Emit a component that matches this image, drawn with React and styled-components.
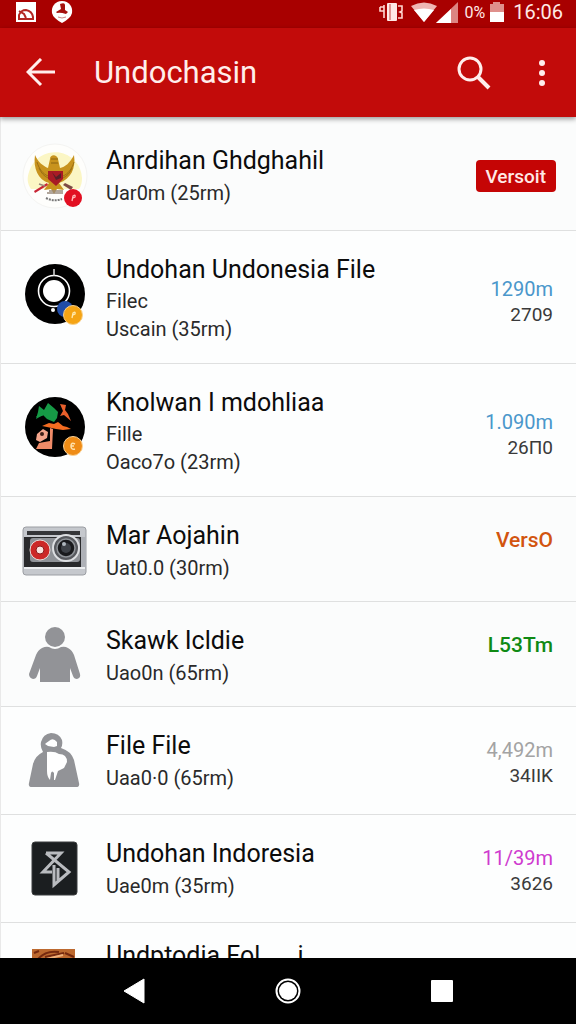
import React from "react";
import styled, { createGlobalStyle, css } from "styled-components";

// every download in the list, "size" picks the row padding
const downloads = [
	{
		icon: "garuda",
		title: "Anrdihan Ghdghahil",
		meta: "Uar0m (25rm)",
		badge: "Versoit",
		size: "first",
	},
	{
		icon: "disc",
		title: "Undohan Undonesia File",
		kind: "Filec",
		meta: "Uscain (35rm)",
		value: "1290m",
		count: "2709",
		tone: "#4a97cb",
		size: "tall",
	},
	{
		icon: "plants",
		title: "Knolwan I mdohliaa",
		kind: "Fille",
		meta: "Oaco7o (23rm)",
		value: "1.090m",
		count: "26Π0",
		tone: "#4a97cb",
		size: "tall",
	},
	{
		icon: "camera",
		title: "Mar Aojahin",
		meta: "Uat0.0 (30rm)",
		value: "VersO",
		tone: "#d2540f",
		strong: true,
		size: "compact",
	},
	{
		icon: "person",
		title: "Skawk Icldie",
		meta: "Uao0n (65rm)",
		value: "L53Tm",
		tone: "#0f8a14",
		strong: true,
		size: "compact",
	},
	{
		icon: "bag",
		title: "File File",
		meta: "Uaa0·0 (65rm)",
		value: "4,492m",
		count: "34IIK",
		tone: "#a3a3a3",
		size: "regular",
	},
	{
		icon: "bluetooth",
		title: "Undohan Indoresia",
		meta: "Uae0m (35rm)",
		value: "11/39m",
		count: "3626",
		tone: "#cf3bcf",
		size: "regular",
	},
	{
		icon: "photo",
		title: "Undptodia Fol\u00a0\u00a0\u00a0\u00a0\u00a0\u00a0i",
		size: "last",
	},
];

function AvatarArt({ name }) {
	switch (name) {
		case "garuda":
			return (
				<>
					<circle cx="33" cy="31" r="32" fill="#fefefc" stroke="#f4f4f2" />
					<path d="M7 27a27 27 0 0 1 53 6c0 5-1 8-3 11H9C5 38 5 33 7 27z" fill="#fbf6c4" />
					<path
						d="M13 10c-2 13 3 25 14 28l-5 7 7-1 3 5 3-5 7 1-5-7c12-4 17-15 15-28-4 8-9 12-14 13l-2-9c-1-5-8-5-8 0l-2 9c-5-2-10-6-13-13z"
						fill="#c8931d"
					/>
					<path d="M15 17c2 7 6 12 11 14m-9-8c2 5 5 8 9 10m26-16c-2 7-6 12-11 14m9-8c-2 5-5 8-9 10" stroke="#9b7014" fill="none" />
					<path d="M29 14h7m-7 4h7" stroke="#8c6512" />
					<path d="M26 26h15v8l-7 7-8-7z" fill="#a81a25" />
					<path d="M30 27l4 5 5-4v5l-5 2z" fill="#542027" />
					<path d="M12 46l13-8 1 2-13 8z" fill="#c82535" />
					<path d="M43 38l8 4-2 3-8-5z" fill="#7d4a45" />
					<path d="M17 39l6 2m4 5h14M25 48h16" stroke="#98897b" strokeWidth="1.5" fill="none" />
					<path d="M24 53q8 4 16 1" stroke="#777" strokeWidth="2" strokeDasharray="2 1" fill="none" />
					<circle cx="51" cy="53" r="9" fill="#e20f22" />
					<path d="M50 56l1-5q3-2 2 1l-2 1" stroke="#ffb8b8" strokeWidth="1.3" fill="none" />
				</>
			);
		case "disc":
			return (
				<>
					<circle cx="33" cy="31" r="30" fill="#000" />
					<circle cx="32" cy="28" r="15.5" fill="none" stroke="#fff" strokeWidth="1.6" />
					<circle cx="32" cy="28" r="11" fill="#fff" />
					<path d="M32 6v7" stroke="#ddd" strokeWidth="1.5" />
					<circle cx="31" cy="47" r="2" fill="#fff" />
					<circle cx="43" cy="46" r="8" fill="#204ca6" />
					<circle cx="51" cy="52" r="9.5" fill="#f5a414" stroke="#f8d18d" />
					<path d="M50 55l1-5q3-2 2 1l-2 1" stroke="#ffe9ad" strokeWidth="1.3" fill="none" />
				</>
			);
		case "plants":
			return (
				<>
					<circle cx="33" cy="31" r="30" fill="#000" />
					<path d="M17 10l5 4 4-7 6 5 4 4-1 6-3 4-7-3-4-4-7 4 2-7z" fill="#169a46" />
					<path d="M14 21l5-6 4 3-3 2z" fill="#169a46" />
					<path d="M38 8l6 1-1 5 3 4 3 7-7-6-4 1 3-5z" fill="#e95f2b" />
					<path d="M27 27l5 1 4-2 5 4 4 1 4 2-8 1-7-1-9-2-5-1z" fill="#f36c21" />
					<path d="M28 32l3 1-1 20H14l3-6 11-2z" fill="#f08b68" />
					<path d="M15 38l6-5 5 3-1 6-7 4-4-2z" fill="#f4a58b" />
					<circle cx="20" cy="38" r="2" fill="#402018" />
					<circle cx="51" cy="50" r="9.5" fill="#ef8c16" stroke="#fbd398" />
					<path d="M53 48q-4-2-4 2t4 3m-4-3h3" stroke="#ffe3ae" strokeWidth="1.5" fill="none" />
				</>
			);
		case "camera":
			return (
				<>
					<rect x="1" y="7" width="63" height="48" rx="3" fill="#c5c8cd" stroke="#9b9ea3" />
					<rect x="5" y="11" width="53" height="4" fill="#353639" />
					<path d="M2 17h57v30H2z" fill="#292a2c" />
					<rect x="8" y="18" width="50" height="24" rx="3" fill="#8f9297" />
					<path d="M59 17h5v30h-5z" fill="#aeb1b7" />
					<path d="M2 48h61" stroke="#eceef0" strokeWidth="2" />
					<circle cx="18" cy="30" r="10" fill="#cc2827" stroke="#e8dad8" />
					<circle cx="18" cy="30" r="4" fill="#f9e4de" stroke="#8f1719" />
					<circle cx="44" cy="28" r="13" fill="#57595e" stroke="#dddfe2" strokeWidth="2" />
					<circle cx="44" cy="28" r="9" fill="#191a1d" stroke="#8f9398" strokeWidth="1.5" />
					<circle cx="44" cy="28" r="5" fill="#3d4147" />
					<circle cx="42" cy="24" r="2" fill="#aeb6bd" />
				</>
			);
		case "person":
			return (
				<g fill="#929397">
					<circle cx="33" cy="12" r="10" />
					<path d="M20 23q4-2 7-1 6 4 12 0 4-1 7 1 4 2 6 7l6 19q1 4-3 5-3 0-4-3l-3-8v14H18V43l-3 8q-1 3-4 3-4-1-4-5l7-19q2-5 6-7z" />
				</g>
			);
		case "bag":
			return (
				<>
					<path
						d="M7 53l4-19q2-8 10-12-3-5-2-10 2-8 10-9 8 0 11 7 1 5-1 8 10 3 13 12l5 23q1 4-3 4H10q-4 0-3-4z"
						fill="#929397"
					/>
					<path d="M23 14q1-1 4-3 4-4 8 1v4l-3 1-6-1z" fill="#fff" />
					<path d="M25 22q8-1 12 2 8 0 8 8l-3 6-6 3-3 9h-1v-7q-2-3-3 0l-1 7q-3-3-3-9z" fill="#fff" />
				</>
			);
		case "bluetooth":
			return (
				<>
					<rect x="10" y="4" width="45" height="53" rx="3" fill="#1b1e20" stroke="#3b3d3e" />
					<path d="M24 15h15L21 34h9M24 15l23 19-15 13V27M36 30v13" fill="none" stroke="#b9bbbf" strokeWidth="3" />
				</>
			);
		default:
			return (
				<>
					<path d="M10 10h43v44H10z" fill="#bc692f" />
					<path d="M16 20q8-9 21-7m-14 5l19-4M12 14l5-2m26 2l9 4" stroke="#75290f" strokeWidth="2" fill="none" />
					<path d="M20 21l21-5" stroke="#f1b27b" strokeWidth="2" />
				</>
			);
	}
}

function StatusIcons() {
	return (
		<StatusGroup>
			<svg width="26" height="20" viewBox="0 0 26 20" aria-hidden="true">
				<path d="M6 3v13M2 5v4h4M2 5h4M20 4h4v5l-2 1 2 1v5h-4" stroke="#ffd6d0" strokeWidth="1.6" fill="none" />
				<rect x="9" y="1" width="10" height="18" rx="1" fill="#ffe9e6" />
				<path d="M12 2v16" stroke="#c54540" />
			</svg>
			<svg width="52" height="22" viewBox="0 0 52 22" aria-hidden="true">
				<path d="M3 5q13-7 26 0L16 21z" fill="#efb6b3" />
				<path d="M6 9q10-3 20 0L16 21z" fill="#fff" />
				<path d="M50 1v21H28z" fill="#dc8582" />
				<path d="M43 8v14H28z" fill="#fff" />
			</svg>
			<Percent>0%</Percent>
			<svg width="16" height="20" viewBox="0 0 16 20" aria-hidden="true">
				<path d="M1 2h3V0h7v2h4v9H1z" fill="#df908c" />
				<path d="M1 10h14v10H1z" fill="#fff" />
			</svg>
			<Clock>16:06</Clock>
		</StatusGroup>
	);
}

function DownloadRow({ item }) {
	const tall = item.size === "tall";
	return (
		<Row $size={item.size}>
			<Avatar viewBox="0 0 66 62" $tall={tall} aria-hidden="true">
				<AvatarArt name={item.icon} />
			</Avatar>
			<Details>
				<Name>{item.title}</Name>
				{item.kind && <Meta $tall={tall}>{item.kind}</Meta>}
				{item.meta && <Meta $tall={tall}>{item.meta}</Meta>}
			</Details>
			{item.badge && <Badge type="button">{item.badge}</Badge>}
			{item.value && (
				<Values $tall={tall}>
					<Value $tone={item.tone} $strong={item.strong}>
						{item.value}
					</Value>
					{item.count && <Count>{item.count}</Count>}
				</Values>
			)}
		</Row>
	);
}

function App() {
	return (
		<>
			<GlobalStyle />
			<Screen>
				<StatusBar>
					<StatusGroup>
						<Notice viewBox="0 0 22 22" aria-hidden="true">
							<path d="M1 1h20v20H1z" fill="#fff" />
							<path d="M4 18v-4q2-5 7-5 6 1 7 7v2M4 10l5 3 2 4M3 18h16" stroke="#b32622" strokeWidth="2" fill="none" />
						</Notice>
						<Notice viewBox="0 0 22 22" aria-hidden="true">
							<path d="M11 0C4 0 0 6 1 12q1 5 10 10 9-5 10-10C22 6 18 0 11 0z" fill="#fff" />
							<path d="M9 3q5-2 5 1v5l3 2-2 2q-6-2-9-1l-1-1 5-3z" fill="#a5100d" />
							<path d="M7 16q4 2 8 0" stroke="#cc8582" fill="none" />
						</Notice>
					</StatusGroup>
					<StatusIcons />
				</StatusBar>
				<AppBar>
					<IconButton type="button" aria-label="Back">
						<svg width="30" height="30" viewBox="0 0 30 30">
							<path d="M29 14H3M15 1L2 14l13 13" fill="none" stroke="#ffeeec" strokeWidth="3" />
						</svg>
					</IconButton>
					<Heading>Undochasin</Heading>
					<IconButton type="button" aria-label="Search">
						<svg width="34" height="34" viewBox="0 0 34 34">
							<circle cx="13" cy="13" r="11" fill="none" stroke="#ffeeec" strokeWidth="3" />
							<path d="M21 21l11 11" stroke="#ffeeec" strokeWidth="4" />
						</svg>
					</IconButton>
					<IconButton type="button" aria-label="More options">
						<svg width="8" height="28" viewBox="0 0 8 28" fill="#ffeeec">
							<circle cx="4" cy="4" r="3" />
							<circle cx="4" cy="14" r="3" />
							<circle cx="4" cy="24" r="3" />
						</svg>
					</IconButton>
				</AppBar>
				<List>
					{downloads.map((item) => (
						<DownloadRow key={item.icon} item={item} />
					))}
				</List>
				<NavBar>
					<IconButton type="button" aria-label="Go back">
						<svg width="22" height="26" viewBox="0 0 22 26">
							<path d="M21 1v24L1 13z" fill="#fff" stroke="#fff" strokeLinejoin="round" />
						</svg>
					</IconButton>
					<IconButton type="button" aria-label="Home">
						<svg width="26" height="26" viewBox="0 0 26 26">
							<circle cx="13" cy="13" r="11.5" fill="none" stroke="#fff" strokeWidth="2" />
							<circle cx="13" cy="13" r="9" fill="#fff" />
						</svg>
					</IconButton>
					<IconButton type="button" aria-label="Recent apps">
						<svg width="22" height="22" viewBox="0 0 22 22">
							<rect width="22" height="22" rx="1" fill="#fff" />
						</svg>
					</IconButton>
				</NavBar>
			</Screen>
		</>
	);
}

export default App;

const GlobalStyle = createGlobalStyle`
	* {
		box-sizing: border-box;
	}
	body {
		margin: 0;
		background: #fdfdfd;
		font-family: Roboto, "Liberation Sans", sans-serif;
	}
`;

const Screen = styled.div`
	display: flex;
	flex-direction: column;
	height: 100vh;
	overflow: hidden;
`;

const StatusBar = styled.div`
	flex: none;
	display: flex;
	justify-content: space-between;
	align-items: center;
	height: 28px;
	padding: 0 13px 4px 15px;
	background: #a80000;
	color: #ffe9e6;
`;

const StatusGroup = styled.div`
	display: flex;
	align-items: center;
	gap: 4px;
`;

const Notice = styled.svg`
	width: 22px;
	height: 22px;
	margin-right: 10px;
`;

const Percent = styled.span`
	font-size: 16px;
`;

const Clock = styled.span`
	padding-left: 4px;
	font-size: 20px;
`;

const AppBar = styled.header`
	flex: none;
	display: flex;
	align-items: center;
	height: 89px;
	padding: 0 30px 0 26px;
	background: #c20b0a;
	box-shadow: 0 2px 5px rgba(0, 0, 0, 0.4);
	z-index: 1;
`;

const IconButton = styled.button`
	display: flex;
	padding: 0;
	border: 0;
	background: none;
	cursor: pointer;
	${AppBar} &:last-child {
		margin-left: 47px;
	}
`;

const Heading = styled.h1`
	flex: 1;
	margin: 0;
	padding-left: 38px;
	color: #ffeeec;
	font-size: 31px;
	font-weight: 400;
	line-height: 40px;
`;

const List = styled.ul`
	flex: 1;
	min-height: 0;
	margin: 0;
	padding: 0;
	overflow: hidden;
	list-style: none;
	border-left: 1px solid #e9e9e9;
`;

const rowPadding = {
	first: "27px 20px 22px 21px",
	tall: "22px 20px 20px 21px",
	compact: "22px 20px 18px 21px",
	regular: "22px 20px 21px 21px",
	last: "16px 20px 20px 21px",
};

const Row = styled.li`
	display: flex;
	align-items: center;
	gap: 18px;
	padding: ${({ $size }) => rowPadding[$size]};
	border-bottom: 1px solid #dfe0e0;
	background: #fdfefe;
	${({ $size }) =>
		($size === "first" || $size === "compact") &&
		css`
			background: #fbfcfc;
		`}
	${({ $size }) =>
		$size === "last" &&
		css`
			align-items: flex-start;
		`}
`;

const Avatar = styled.svg`
	flex: none;
	width: 66px;
	height: 62px;
	overflow: visible;
	margin-bottom: ${({ $tall }) => ($tall ? "8px" : "0")};
`;

const Details = styled.div`
	flex: 1;
	min-width: 0;
	white-space: nowrap;
`;

const Name = styled.h2`
	margin: 0;
	color: #0c0c0c;
	font-size: 25px;
	font-weight: 400;
	line-height: 34px;
`;

const Meta = styled.p`
	margin: 0;
	color: #2a2a2a;
	font-size: 20px;
	line-height: ${({ $tall }) => ($tall ? "28px" : "30px")};
`;

const Badge = styled.button`
	height: 32px;
	padding: 0 10px;
	border: 0;
	border-radius: 4px;
	background: #c50505;
	color: #ffe9e6;
	font-family: inherit;
	font-size: 19px;
	font-weight: 500;
`;

const Values = styled.div`
	align-self: flex-start;
	padding: ${({ $tall }) => ($tall ? "23px" : "8px")} 3px 0 0;
	text-align: right;
	line-height: 26px;
`;

const Value = styled.div`
	color: ${({ $tone }) => $tone};
	font-size: ${({ $strong }) => ($strong ? "21px" : "20px")};
	font-weight: ${({ $strong }) => ($strong ? 500 : 400)};
`;

const Count = styled.div`
	color: #3a3a3a;
	font-size: 19px;
`;

const NavBar = styled.nav`
	flex: none;
	display: flex;
	justify-content: center;
	align-items: center;
	gap: 130px;
	height: 66px;
	background: #000;
`;
